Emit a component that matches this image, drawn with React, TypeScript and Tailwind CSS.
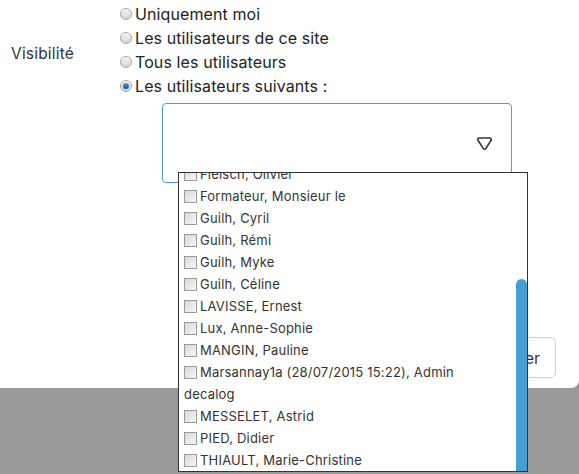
import React from "react";

const users: string[] = [
  "Fleisch, Ollvier",
  "Formateur, Monsieur le",
  "Guilh, Cyril",
  "Guilh, Rémi",
  "Guilh, Myke",
  "Guilh, Céline",
  "LAVISSE, Ernest",
  "Lux, Anne-Sophie",
  "MANGIN, Pauline",
  "Marsannay1a (28/07/2015 15:22), Admin decalog",
  "MESSELET, Astrid",
  "PIED, Didier",
  "THIAULT, Marie-Christine",
];

const options = [
  { label: "Uniquement moi", checked: false },
  { label: "Les utilisateurs de ce site", checked: false },
  { label: "Tous les utilisateurs", checked: false },
  { label: "Les utilisateurs suivants :", checked: true },
];

function Radio({ checked }: { checked: boolean }) {
  return (
    <span className="relative inline-block w-[12px] h-[12px] rounded-full border border-[#a8a8a8] bg-gradient-to-b from-[#f4f4f4] to-[#d4d4d4] shrink-0">
      {checked && (
        <span className="absolute left-[2px] top-[2px] w-[6px] h-[6px] rounded-full bg-gradient-to-b from-[#4aa3e0] to-[#0b4f8a]" />
      )}
    </span>
  );
}

function Box() {
  return (
    <span className="inline-block align-[-2px] w-[13px] h-[13px] border border-[#9a9a9a] bg-gradient-to-br from-[#d8d8d8] to-[#f8f8f8] mr-[3px]" />
  );
}

export default function App() {
  return (
    <div
      className="relative w-[579px] h-[474px] overflow-hidden bg-[#999999]"
      style={{ fontFamily: "Inter, 'Open Sans', sans-serif" }}
    >
      {/* dialog body */}
      <div className="w-[579px] h-[388px] bg-white rounded-br-[8px] flex flex-col">
        <div className="flex pt-[2px]">
          <div className="w-[120px] pl-[11px] pt-[40px] text-[15.5px] tracking-[0.2px] text-[#333]">Visibilité</div>
          <div className="flex flex-col">
            {options.map((o) => (
              <label key={o.label} className="flex items-center h-[24px] gap-[3px] text-[16px] tracking-[0.1px] text-[#222]">
                <Radio checked={o.checked} />
                <span>{o.label}</span>
              </label>
            ))}
            <div className="ml-[42px] mt-[5px] w-[350px] h-[80px] rounded-[4px] border border-[#4a9fd5] flex items-center justify-end pr-[18px]">
              <svg width="17" height="15" viewBox="0 0 17 15" fill="none">
                <path
                  d="M3.2 2h10.6c1.2 0 1.9 1.3 1.3 2.3l-5.3 8.3c-.6.9-1.9.9-2.5 0L2 4.3C1.3 3.3 2 2 3.2 2z"
                  stroke="#333"
                  strokeWidth="1.6"
                  strokeLinejoin="round"
                />
              </svg>
            </div>
          </div>
        </div>
        <div className="mt-auto mb-[10px] flex justify-end pr-[23px]">
          <button className="h-[41px] px-[15px] rounded-[5px] border border-[#cfcfcf] text-[16px] text-[#333] bg-white">
            Annuler
          </button>
        </div>
      </div>

      {/* user picker dropdown */}
      <div className="absolute left-[178px] top-[172px] w-[350px] h-[300px] border border-[#333] bg-white flex overflow-hidden">
        <ul className="flex-1 pl-[5px] pr-[8px] -mt-[10px] text-[13px] tracking-[0.2px] leading-[22px] text-[#333]">
          {users.map((u) => (
            <li key={u}>
              <Box />
              {u}
            </li>
          ))}
        </ul>
        <div className="w-[11px] flex flex-col justify-end">
          <div className="h-[192px] w-[11px] rounded-t-full rounded-b-[4px] bg-[#449fd5]" />
        </div>
      </div>
    </div>
  );
}
